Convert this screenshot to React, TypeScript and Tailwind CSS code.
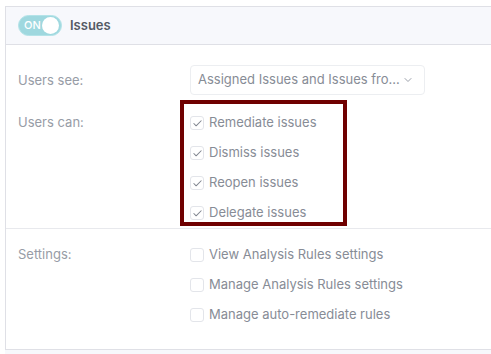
import { Check, ChevronDown } from 'lucide-react';

// Checkbox row used in both sections
function CheckRow({ label, checked }: { label: string; checked: boolean }) {
  return (
    <div className="flex h-[30px] items-center gap-[5px]">
      <span className="flex h-[14px] w-[14px] items-center justify-center rounded-[3px] border border-[#e3e5ea] bg-white">
        {checked && <Check className="h-[11px] w-[11px] text-[#7f848e]" strokeWidth={2.25} />}
      </span>
      <span className="text-[13px] text-[#878c96]">{label}</span>
    </div>
  );
}

export default function App() {
  return (
    <div
      className="relative h-[354px] w-[491px] overflow-hidden bg-white pl-[5px] pt-[6px]"
      style={{ fontFamily: 'Inter, "Noto Sans", sans-serif' }}
    >
      <div className="w-[560px] border-b border-l border-t border-[#dfe0e6]">
        {/* Header */}
        <div className="flex h-[38px] items-center gap-[8px] border-b border-[#dfe0e6] bg-[#f7f8fc] pl-[12px]">
          <div className="flex h-[21px] w-[44px] items-center justify-between rounded-full border border-[#b4e3e8] bg-[#9fd8df] pl-[5px] pr-[2px]">
            <span className="text-[11px] font-medium text-white">ON</span>
            <span className="h-[17px] w-[17px] rounded-full bg-white" />
          </div>
          <span className="text-[13px] font-semibold text-[#545a65]">Issues</span>
        </div>

        {/* Permissions */}
        <div className="border-b border-[#e8e9ed] pl-[12px] pt-[20px]">
          <div className="flex items-center">
            <span className="w-[172px] pt-[1px] text-[13px] text-[#979ca6]">Users see:</span>
            <div className="flex h-[30px] w-[235px] items-center justify-between rounded-[4px] border border-[#eceef1] pl-[7px] pr-[10px]">
              <span className="text-[13px] text-[#878c96]">Assigned Issues and Issues fro...</span>
              <ChevronDown className="h-[12px] w-[12px] text-[#9ba0aa]" />
            </div>
          </div>
          <div className="mt-[13px] flex">
            <span className="flex h-[30px] w-[172px] items-center text-[13px] text-[#979ca6]">Users can:</span>
            <div className="flex flex-col">
              <CheckRow label="Remediate issues" checked />
              <CheckRow label="Dismiss issues" checked />
              <CheckRow label="Reopen issues" checked />
              <CheckRow label="Delegate issues" checked />
            </div>
          </div>
        </div>

        {/* Settings */}
        <div className="flex pb-[19px] pl-[12px] pt-[11px]">
          <span className="flex h-[30px] w-[172px] items-center text-[13px] text-[#979ca6]">Settings:</span>
          <div className="flex flex-col">
            <CheckRow label="View Analysis Rules settings" checked={false} />
            <CheckRow label="Manage Analysis Rules settings" checked={false} />
            <CheckRow label="Manage auto-remediate rules" checked={false} />
          </div>
        </div>
      </div>
      <div className="h-[10px] bg-[#f7f8fc]" />

      {/* Highlight annotation */}
      <div className="pointer-events-none absolute left-[180px] top-[100px] h-[126px] w-[167px] border-[4px] border-[#6f0000]" />
    </div>
  );
}
